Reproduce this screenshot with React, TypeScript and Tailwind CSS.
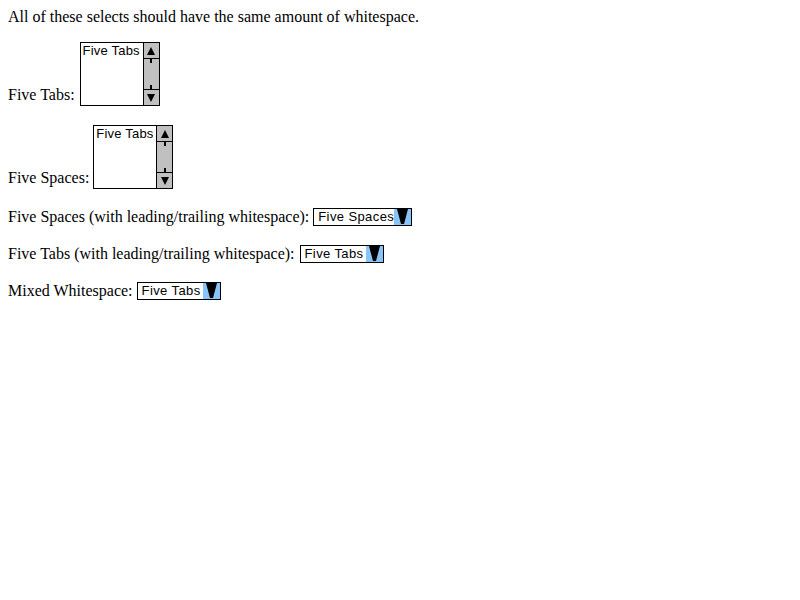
import React from 'react';

const serif = { fontFamily: '"Liberation Serif", "Times New Roman", serif' };

const ListBox: React.FC<{ text: string }> = ({ text }) => (
  <div className="flex w-[80px] h-[64px] border border-black bg-white">
    <div className="flex-1 pl-[2px] pt-[1px] text-[13px] leading-[14px] tracking-[0.2px] text-black font-['Liberation_Sans',Arial,sans-serif] whitespace-nowrap overflow-hidden">
      {text}
    </div>
    <div className="w-[16px] flex flex-col border-l border-black bg-[#c0c0c0]">
      <div className="h-[16px] border-b border-black flex items-center justify-center">
        <svg width="10" height="10" viewBox="0 0 10 10">
          <polygon points="5,1 9,9 1,9" fill="black" />
        </svg>
      </div>
      <div className="flex-1 flex flex-col items-center justify-between">
        <div className="w-[2px] h-[4px] bg-black" />
        <div className="w-[2px] h-[4px] bg-black" />
      </div>
      <div className="h-[16px] border-t border-black flex items-center justify-center">
        <svg width="10" height="10" viewBox="0 0 10 10">
          <polygon points="1,1 9,1 5,9" fill="black" />
        </svg>
      </div>
    </div>
  </div>
);

const DropDown: React.FC<{ text: string; width: string }> = ({ text, width }) => (
  <div className={`flex h-[18px] border border-black bg-white ${width}`}>
    <div className="flex-1 pl-[4px] text-[13px] leading-[16px] tracking-[0.4px] text-black font-['Liberation_Sans',Arial,sans-serif] whitespace-nowrap overflow-hidden">
      {text}
    </div>
    <div className="w-[17px] h-[16px] bg-[#88c4f8] flex items-center justify-center">
      <svg width="17" height="16" viewBox="0 0 17 16">
        <polygon points="3,0 14,0 10,15 7,15" fill="black" />
      </svg>
    </div>
  </div>
);

const App: React.FC = () => {
  return (
    <div className="min-h-screen w-full bg-white text-black p-[8px] text-[16px] leading-[18px]" style={serif}>
      <div className="h-[18px]">All of these selects should have the same amount of whitespace.</div>

      <div className="mt-[16px] flex items-end gap-[5px]">
        <span className="mb-[2px]">Five Tabs:</span>
        <ListBox text="Five Tabs" />
      </div>

      <div className="mt-[19px] flex items-end gap-[4px]">
        <span className="mb-[2px]">Five Spaces:</span>
        <ListBox text="Five Tabs" />
      </div>

      <div className="mt-[19px] flex items-center gap-[4px]">
        <span>Five Spaces (with leading/trailing whitespace):</span>
        <DropDown text="Five Spaces" width="w-[99px]" />
      </div>

      <div className="mt-[19px] flex items-center gap-[5px]">
        <span>Five Tabs (with leading/trailing whitespace):</span>
        <DropDown text="Five Tabs" width="w-[84px]" />
      </div>

      <div className="mt-[19px] flex items-center gap-[4px]">
        <span>Mixed Whitespace:</span>
        <DropDown text="Five Tabs" width="w-[84px]" />
      </div>
    </div>
  );
};

export default App;
